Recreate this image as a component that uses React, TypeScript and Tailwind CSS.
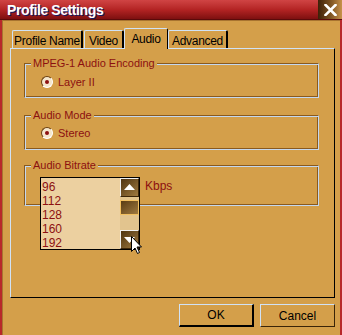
import React from "react";

const BG = "bg-[#d49f4a]";

function Tab({ label, active, className }: { label: string; active?: boolean; className: string }) {
  if (active) {
    return (
      <div
        className={`relative z-10 -mb-[1px] h-[21px] ${BG} border-l border-t border-[#d0e2f6] border-r border-r-black rounded-t-[2px] flex items-start justify-center pt-[3px] whitespace-nowrap text-[12px] leading-[14px] tracking-[-0.3px] text-black ${className}`}
      >
        {label}
      </div>
    );
  }
  return (
    <div
      className={`h-[18px] ${BG} border-l border-t border-[#d0e2f6] border-r-[2px] border-r-black rounded-t-[2px] flex items-center justify-center pt-[2px] whitespace-nowrap text-[12px] leading-[14px] tracking-[-0.3px] text-black ${className}`}
    >
      {label}
    </div>
  );
}

function Group({ title, className, children }: { title: string; className: string; children: React.ReactNode }) {
  return (
    <div
      className={`relative border border-t-[#8a5a1e] border-l-[#8a5a1e] border-r-[#c4d8f0] border-b-[#c4d8f0] shadow-[inset_1px_1px_0_#c4d8f0,inset_-1px_-1px_0_#8a5a1e] ${className}`}
    >
      <span className={`absolute -top-[8px] left-[6px] px-[2px] ${BG} whitespace-nowrap text-[11px] leading-[14px] text-[#8c1010]`}>
        {title}
      </span>
      {children}
    </div>
  );
}

function Radio({ label }: { label: string }) {
  return (
    <div className="flex items-center gap-[5px]">
      <div className="w-[12px] h-[12px] rounded-full bg-[#f4e6cc] border border-t-[#6a4010] border-l-[#6a4010] border-r-white border-b-white flex items-center justify-center">
        <div className="w-[4px] h-[4px] rounded-full bg-[#8c1010]" />
      </div>
      <span className="text-[11px] leading-[14px] text-[#8c1010]">{label}</span>
    </div>
  );
}

function ScrollBtn({ h, dir }: { h: string; dir: "up" | "down" }) {
  return (
    <div
      className={`${h} w-[19px] border border-t-[#f0f0f0] border-l-[#f0f0f0] border-r-[#3a2408] border-b-[#3a2408] bg-gradient-to-br from-[#4e3410] to-[#a07a40] flex items-center justify-center`}
    >
      <svg width="11" height="7" viewBox="0 0 11 7">
        {dir === "up" ? <path d="M5.5 0 L11 6 L0 6 Z" fill="#fff" /> : <path d="M0 1 L11 1 L5.5 7 Z" fill="#fff" />}
      </svg>
    </div>
  );
}

export default function App() {
  const rates = ["96", "112", "128", "160", "192"];
  return (
    <div className="w-[342px] h-[335px] flex flex-col overflow-hidden bg-[#b8282a] font-['Liberation_Sans',Arial,sans-serif]">
      {/* title bar */}
      <div className="h-[20px] shrink-0 flex items-stretch bg-gradient-to-b from-[#d04444] via-[#b42424] to-[#7e1010] border-b border-[#5a0a0a]">
        <div className="flex-1 pl-[7px] pt-[2px] text-[14px] leading-[16px] font-bold tracking-[-0.4px] text-white [text-shadow:1px_1px_0_#101a60]">
          Profile Settings
        </div>
        <div className="w-[24px] flex items-center justify-center bg-gradient-to-r from-[#3e2008] via-[#7a5020] to-[#c8924a]">
          <svg width="13" height="12" viewBox="0 0 13 12">
            <path d="M1.5 1 L11.5 11 M11.5 1 L1.5 11" stroke="#fff" strokeWidth="2.6" strokeLinecap="square" />
          </svg>
        </div>
      </div>

      {/* body */}
      <div className={`flex-1 mx-[2px] ${BG} border-l border-t border-[#a87430] pt-[7px] pl-[7px] flex flex-col`}>
        {/* tabs */}
        <div className="flex items-end h-[20px] pl-[2px]">
          <Tab label="Profile Name" className="w-[71px]" />
          <Tab label="Video" className="w-[40px] ml-[1px]" />
          <Tab label="Audio" active className="w-[44px]" />
          <Tab label="Advanced" className="w-[60px]" />
        </div>

        {/* panel */}
        <div className="w-[325px] h-[250px] border border-t-[#d0e2f6] border-l-[#d0e2f6] border-r-black border-b-black pl-[13px] pt-[14px] flex flex-col">
          <Group title="MPEG-1 Audio Encoding" className="w-[295px] h-[35px] pt-[11px] pl-[16px]">
            <Radio label="Layer II" />
          </Group>

          <Group title="Audio Mode" className="w-[295px] h-[35px] mt-[17px] pt-[10px] pl-[16px]">
            <Radio label="Stereo" />
          </Group>

          <Group title="Audio Bitrate" className="w-[295px] h-[41px] mt-[15px] pt-[11px] pl-[15px]">
            <div className="flex items-start">
              <div className="relative w-[100px] h-[15px]">
                {/* open dropdown list */}
                <div className="absolute top-0 left-0 w-[100px] h-[73px] border border-black bg-[#ecd0a0] flex z-20">
                  <div className="flex-1 pl-[1px] pt-[2px] flex flex-col">
                    {rates.map((r) => (
                      <div key={r} className="h-[14px] text-[12px] leading-[14px] text-[#8c1010]">
                        {r}
                      </div>
                    ))}
                  </div>
                  <div className="w-[19px] flex flex-col bg-[#e2c48e]">
                    <ScrollBtn h="h-[19px]" dir="up" />
                    <div className="h-[3px]" />
                    <div className="h-[15px] w-[19px] border border-[#f2c060] bg-gradient-to-br from-[#5a3c12] to-[#a07a40]" />
                    <div className="flex-1" />
                    <ScrollBtn h="h-[19px]" dir="down" />
                  </div>
                  {/* mouse pointer */}
                  <svg className="absolute left-[90px] top-[58px]" width="12" height="19" viewBox="0 0 12 19">
                    <path d="M0.5 0.5 L0.5 15.5 L4 12 L6.5 17.5 L8.5 16.5 L6 11 L10.5 11 Z" fill="#fff" stroke="#000" strokeWidth="1" />
                  </svg>
                </div>
              </div>
              <span className="ml-[5px] mt-[2px] text-[12px] leading-[14px] text-[#8c1010]">Kbps</span>
            </div>
          </Group>
        </div>

        {/* buttons */}
        <div className="flex justify-end gap-[6px] w-[325px] mt-[6px]">
          <button className="w-[75px] h-[23px] border border-t-[#d0e2f6] border-l-[#d0e2f6] border-r-[2px] border-b-[2px] border-r-black border-b-black text-[12px] leading-[14px] text-black">
            OK
          </button>
          <button className="w-[75px] h-[23px] border border-t-[#d0e2f6] border-l-[#d0e2f6] border-r-[#3a2408] border-b-[#3a2408] text-[12px] leading-[14px] text-black">
            Cancel
          </button>
        </div>
      </div>
    </div>
  );
}
